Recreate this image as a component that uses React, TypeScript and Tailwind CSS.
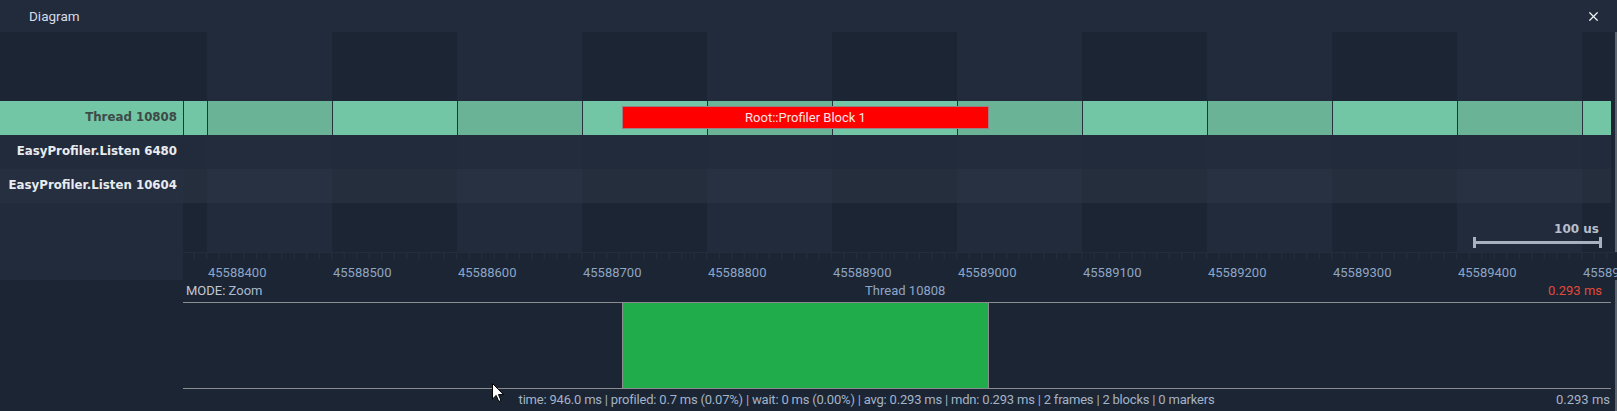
import { X } from "lucide-react";

// timeline geometry: first partial column, then 125px grid columns, last one fills
type Col = { w: string; light: boolean };

const COLS: Col[] = [
  { w: "w-[24px]", light: false },
  ...Array.from({ length: 11 }, (_, k) => ({ w: "w-[125px]", light: k % 2 === 0 })),
  { w: "flex-1", light: false },
];

const LABELS = Array.from({ length: 12 }, (_, k) => String(45588400 + k * 100));

const TICKS = Array.from({ length: 116 }, (_, i) => 11.2 + i * 12.5);

const sans = "font-['Roboto','Liberation_Sans',sans-serif]";
const bold = "font-['DejaVu_Sans','Liberation_Sans',sans-serif] font-bold";

function Stripes({ dark, light }: { dark: string; light: string }) {
  return (
    <div className="flex h-full">
      {COLS.map((c, i) => (
        <div key={i} className={`${c.w} h-full shrink-0 ${c.light ? light : dark}`} />
      ))}
    </div>
  );
}

function ThreadRow() {
  return (
    <div className="flex h-[34px]">
      <div className={`w-[183px] shrink-0 bg-[#72c5a5] flex items-center justify-end pr-[6px] text-[11.8px] text-[#3d4a48] ${bold}`}>
        Thread 10808
      </div>
      <div className="relative flex-1 flex">
        {COLS.map((c, i) => (
          <div
            key={i}
            className={`${c.w} h-full shrink-0 border-l border-[#28313e] ${c.light ? "bg-[#6bb397]" : "bg-[#72c5a5]"}`}
          />
        ))}
        {/* block */}
        <div className={`absolute left-[439px] top-[5px] w-[367px] h-[23px] bg-[#ff0000] border border-[#9a7f86] flex items-center justify-center text-[13px] text-[#fbe6e6] ${sans}`}>
          Root::Profiler Block 1
        </div>
      </div>
    </div>
  );
}

function LabelRow({ label, bg, dark, light }: { label: string; bg: string; dark: string; light: string }) {
  return (
    <div className="flex h-[34px]">
      <div className={`w-[183px] shrink-0 ${bg} flex items-center justify-end pr-[6px] text-[11.8px] text-[#e8ebf0] ${bold}`}>
        {label}
      </div>
      <div className="flex-1">
        <Stripes dark={dark} light={light} />
      </div>
    </div>
  );
}

function Ruler() {
  return (
    <div className="flex h-[28px]">
      <div className="w-[183px] shrink-0 bg-[#222b3b]" />
      <div className="relative flex-1 bg-[#1c2533] border-t border-[#232d3c]">
        <svg className="absolute left-0 top-0" width="1428" height="8">
          {TICKS.map((x, i) => (
            <line key={i} x1={x} x2={x} y1="0" y2="6" stroke="#263141" strokeWidth="1" />
          ))}
        </svg>
        <div className="flex h-full pt-[11px]">
          {COLS.map((c, i) => (
            <div key={i} className={`${c.w} shrink-0 overflow-x-hidden whitespace-nowrap leading-[16px]`}>
              {i > 0 && (
                <span className={`pl-[1px] text-[13px] text-[#8ea6c6] ${sans}`}>{LABELS[i - 1]}</span>
              )}
            </div>
          ))}
        </div>
      </div>
    </div>
  );
}

function Cursor() {
  return (
    <svg className="absolute left-[492px] top-[383px]" width="13" height="20" viewBox="0 0 13 20">
      <path d="M0.5 0.5 L0.5 16 L4.2 12.4 L6.8 18.5 L9 17.5 L6.5 11.6 L11.5 11.6 Z" fill="#ffffff" stroke="#000000" strokeWidth="1" />
    </svg>
  );
}

export default function App() {
  return (
    <div className={`relative w-[1617px] h-[411px] overflow-hidden bg-[#1c2533] ${sans}`}>
      {/* title bar */}
      <div className="h-[32px] bg-[#222b3c] flex items-center justify-between pl-[29px] pr-[16px]">
        <span className="text-[13.5px] text-[#d6dce6]">Diagram</span>
        <X className="w-[15px] h-[15px] text-[#eef1f5]" strokeWidth={2} />
      </div>

      <div className="flex h-[379px]">
        <div className="w-[1611px] flex flex-col">
          {/* top stripes */}
          <div className="flex h-[69px]">
            <div className="w-[183px] shrink-0 bg-[#1c2533]" />
            <div className="flex-1">
              <Stripes dark="bg-[#1c2533]" light="bg-[#222b3c]" />
            </div>
          </div>

          <ThreadRow />
          <LabelRow label="EasyProfiler.Listen 6480" bg="bg-[#222b3b]" dark="bg-[#222b3b]" light="bg-[#232c3c]" />
          <LabelRow label="EasyProfiler.Listen 10604" bg="bg-[#252f3f]" dark="bg-[#242e3d]" light="bg-[#273141]" />

          {/* lower stripes + scale */}
          <div className="flex h-[49px]">
            <div className="w-[183px] shrink-0 bg-[#222b3b]" />
            <div className="relative flex-1">
              <Stripes dark="bg-[#1c2533]" light="bg-[#222b3c]" />
              <div className="absolute right-[9px] top-[18px] flex flex-col items-end">
                <span className={`pr-[3px] text-[12px] leading-[16px] text-[#b7bfcb] ${bold}`}>100 us</span>
                <div className="flex items-center w-[129px] h-[11px]">
                  <div className="w-[3px] h-[11px] bg-[#a9b1be]" />
                  <div className="flex-1 h-[3px] bg-[#a9b1be]" />
                  <div className="w-[3px] h-[11px] bg-[#a9b1be]" />
                </div>
              </div>
            </div>
          </div>

          <Ruler />

          {/* mini map */}
          <div className="flex flex-1">
            <div className="w-[183px] shrink-0 bg-[#1c2533]" />
            <div className="flex-1 flex flex-col">
              <div className="h-[22px] flex items-center text-[13px]">
                <span className="pl-[3px] text-[#c3c9d2]">
                  MODE: <span className="text-[#a9b9cf]">Zoom</span>
                </span>
                <span className="flex-1 text-center text-[#8ea6c6]">Thread 10808</span>
                <span className="pr-[9px] text-[#e04b3c]">0.293 ms</span>
              </div>
              <div className="h-[87px] border-y border-[#8a8c8f] relative">
                <div className="absolute left-[439px] top-0 w-[367px] h-full bg-[#21ac4b] border-x border-[#8a8c8f]" />
              </div>
              <div className="flex-1 flex items-center text-[13px] text-[#a3b3c8]">
                <span className="flex-1 text-center tracking-[-0.2px]">
                  time: 946.0 ms | profiled: 0.7 ms (0.07%) | wait: 0 ms (0.00%) | avg: 0.293 ms | mdn: 0.293 ms | 2 frames | 2 blocks | 0 markers
                </span>
                <span className="pl-[6px] pr-[1px] text-[13px] text-[#a3b3c8]">0.293 ms</span>
              </div>
            </div>
          </div>
        </div>
        <div className="w-[6px] bg-[#1c2533] border-r-2 border-[#5d6572]" />
      </div>

      <Cursor />
    </div>
  );
}
